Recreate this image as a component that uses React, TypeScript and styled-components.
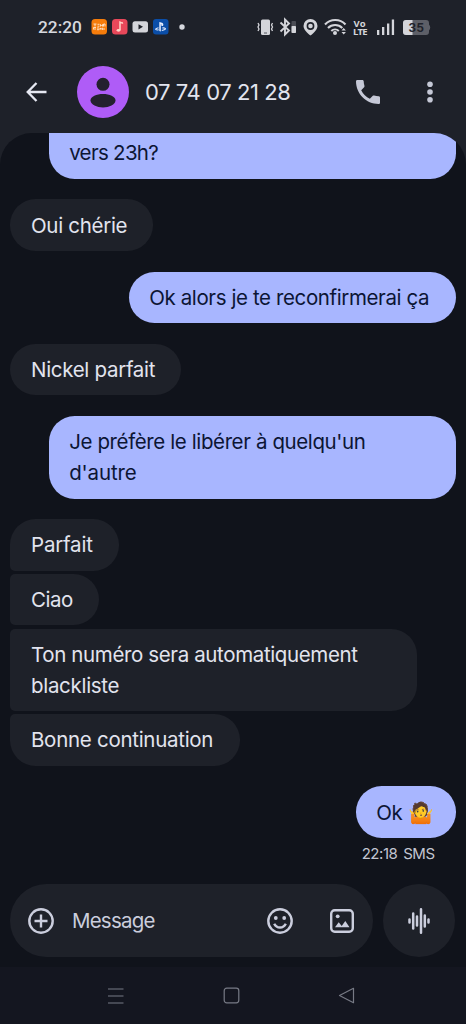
import React from 'react';
import styled, { createGlobalStyle } from 'styled-components';

const Global = createGlobalStyle`
  * { box-sizing: border-box; }
  body { margin: 0; background: #1e2129; }
`;

const Screen = styled.div`
  width: 466px;
  height: 1024px;
  display: flex;
  flex-direction: column;
  overflow: hidden;
  background: #1e2129;
  color: #e2e4ee;
  font-family: Inter, 'Liberation Sans', sans-serif;
  svg { display: block; flex: none; }
`;

const StatusBar = styled.div`
  height: 54px;
  flex: none;
  display: flex;
  align-items: center;
  justify-content: space-between;
  padding: 0 35px 0 38px;
`;

const StatusGroup = styled.div<{ $gap: number }>`
  display: flex;
  align-items: center;
  gap: ${(p) => p.$gap}px;
`;

const Clock = styled.span`
  width: 48px;
  font: 500 17.3px/20px Roboto, sans-serif;
  color: #d6d8de;
`;

const Header = styled.header`
  height: 79px;
  flex: none;
  display: flex;
  align-items: center;
  padding: 0 33px 3px 26px;
`;

const Avatar = styled.div`
  width: 52px;
  height: 52px;
  margin: 0 16px 0 30px;
  border-radius: 50%;
  background: #af5cf7;
  overflow: hidden;
`;

const Contact = styled.h1`
  flex: 1;
  margin: 0;
  font-size: 22px;
  font-weight: 400;
  line-height: 28px;
  letter-spacing: -0.42px;
  white-space: nowrap;
`;

const Actions = styled.div`
  display: flex;
  align-items: center;
  gap: 47px;
  color: #c5c8d6;
`;

const Conversation = styled.main`
  height: 834px;
  flex: none;
  display: flex;
  flex-direction: column;
  border-radius: 32px 32px 0 0;
  overflow: hidden;
  background: #10131b;
  padding: 0 10.4px;
`;

const Thread = styled.div`
  display: flex;
  flex-direction: column;
  gap: 20.6px;
  height: 751px;
  flex: none;
`;

const Group = styled.div<{ $sent?: boolean }>`
  display: flex;
  flex-direction: column;
  gap: 3.1px;
  align-items: ${(p) => (p.$sent ? 'flex-end' : 'flex-start')};
`;

const Bubble = styled.div<{ $sent?: boolean; $w: number; $radius?: string; $cut?: boolean }>`
  width: ${(p) => p.$w}px;
  padding: ${(p) => (p.$cut ? '4.2px 0 10.6px' : '10.3px 0')};
  padding-left: 20.6px;
  border-radius: ${(p) => p.$radius ?? '25.8px'};
  background: ${(p) => (p.$sent ? '#a8b6ff' : '#1e2129')};
  color: ${(p) => (p.$sent ? '#0c1534' : '#e2e4ee')};
`;

const Line = styled.div<{ $ls: number }>`
  font-size: 20.5px;
  line-height: 31px;
  letter-spacing: ${(p) => p.$ls}px;
  white-space: nowrap;
`;

const Stamp = styled.div`
  align-self: flex-end;
  margin: -14px 21px 0 0;
  font-size: 15px;
  line-height: 18px;
  letter-spacing: -0.45px;
  word-spacing: 2px;
  color: #c3c6d2;
`;

const Composer = styled.div`
  display: flex;
  gap: 10px;
`;

const Field = styled.div`
  width: 363px;
  height: 73px;
  border-radius: 37px;
  background: #1e2129;
  display: flex;
  align-items: center;
  padding: 0 18px;
  color: #cbcedd;
`;

const Placeholder = styled.span`
  flex: 1;
  margin-left: 17.5px;
  font-size: 20.5px;
  letter-spacing: -0.75px;
`;

const FieldIcons = styled.div`
  display: flex;
  gap: 36px;
`;

const Voice = styled.div`
  width: 72px;
  height: 73px;
  border-radius: 50%;
  background: #1e2129;
  display: grid;
  place-items: center;
`;

const NavBar = styled.nav`
  height: 57px;
  flex: none;
  background: #141620;
  display: flex;
  align-items: center;
  justify-content: space-between;
  padding: 0 111px 0 107px;
`;

type Msg = { lines: [string, number][]; w: number; radius?: string; cut?: boolean };
const thread: { sent?: boolean; items: Msg[] }[] = [
  { sent: true, items: [{ lines: [['vers 23h?', -0.7]], w: 407, radius: '0 0 25.8px 25.8px', cut: true }] },
  { items: [{ lines: [['Oui chérie', -0.3]], w: 142.5 }] },
  { sent: true, items: [{ lines: [['Ok alors je te reconfirmerai ça', -0.39]], w: 327 }] },
  { items: [{ lines: [['Nickel parfait', -0.3]], w: 171 }] },
  { sent: true, items: [{ lines: [["Je préfère le libérer à quelqu'un", -0.39], ["d'autre", -0.15]], w: 407 }] },
  {
    items: [
      { lines: [['Parfait', -0.2]], w: 109, radius: '25.8px 25.8px 25.8px 5px' },
      { lines: [['Ciao', -0.45]], w: 89, radius: '5px 25.8px 25.8px 5px' },
      { lines: [['Ton numéro sera automatiquement', -0.37], ['blackliste', -0.3]], w: 407, radius: '5px 25.8px 25.8px 5px' },
      { lines: [['Bonne continuation', -0.28]], w: 230, radius: '5px 25.8px 25.8px 25.8px' },
    ],
  },
  { sent: true, items: [{ lines: [['Ok 🤷', -0.3]], w: 100 }] },
];

const AppIcons = () => (
  <svg width="95" height="18" viewBox="0 0 95 18">
    <rect x="0.5" y="1" width="15.5" height="15.5" rx="3.5" fill="#f57c0b" />
    <g stroke="#ffe7cf" strokeWidth="0.9" fill="none">
      <path d="M2.5 6h3M4 6v2.5M6.5 6.3h2M6.5 8.2h2M9.5 8.5v-2l1 1 1-1v2M12.5 8.5V6H14v2.5M2.5 11.5v-2H5M4 12v-2M6 10h2M6 11.7h2M9 12v-2l1.200 1 1.200-1v2M13 10v2" />
    </g>
    <rect x="21" y="1" width="15.5" height="15.5" rx="3.5" fill="#e8485a" />
    <path d="M29 12V4.200c1 .6 2.300.8 3 .5" stroke="#ffd5c8" strokeWidth="1.500" fill="none" />
    <ellipse cx="27.500" cy="12.300" rx="1.900" ry="1.400" fill="#ffd5c8" />
    <rect x="41.500" y="3.300" width="15.500" height="11.200" rx="2.500" fill="#d4d5da" />
    <path d="M47.500 6.200v5.200l4.500-2.600z" fill="#1e2129" />
    <rect x="62" y="1" width="15.500" height="15.500" rx="3" fill="#0b4ea8" />
    <path d="M68.300 4l2.700.8c1.600.6 2 3.300.2 3.300l-.9-.3V6.200l-.5-.1v7.400l-1.500-.5z" fill="#e8efff" />
    <path d="M67.500 9.700c-3 .8-4 2-1 2.300l1.200-.2M71.300 10c2.500-.4 4.600.8 2 1.700l-2.500.9" fill="none" stroke="#e8efff" strokeWidth="1.100" />
    <circle cx="91" cy="9" r="2.700" fill="#d6d8de" />
  </svg>
);

const StatusIcons = () => (
  <svg width="176" height="20" viewBox="255 17 176 20" fill="#d4d5da">
    <rect x="261" y="19.500" width="9" height="15.500" rx="1.500" />
    <path d="M264 33h3" stroke="#555861" />
    <path d="M258 23l1 2-1 2 1 2-1 2M272.500 23l-1 2 1 2-1 2 1 2" fill="none" stroke="#d4d5da" strokeWidth="1.300" />
    <path d="M280.500 22.500l8.500 8-4 4V19.500l4 4-8.500 8" fill="none" stroke="#d4d5da" strokeWidth="1.900" />
    <rect x="291.500" y="21" width="4.500" height="12" rx=".8" fill="#4a4c54" />
    <rect x="291.500" y="26" width="4.500" height="7" rx=".8" />
    <path fillRule="evenodd" d="M310.500 19a7 7 0 0 0-7 7c0 4.500 7 9.500 7 9.500s7-5 7-9.500a7 7 0 0 0-7-7zm0 3.100a3.900 3.900 0 1 1 0 7.800a3.900 3.900 0 0 1 0-7.800z" />
    <circle cx="310.500" cy="26" r="2.300" />
    <g fill="none" stroke="#d4d5da" strokeWidth="2.100">
      <path d="M325 24.500a14 14 0 0 1 20.500 0M328 28a10 10 0 0 1 14.300 0M331.300 31a5.500 5.500 0 0 1 7.500 0" />
    </g>
    <circle cx="335" cy="33" r="2" />
    <path d="M341.500 30.500l2.200-2.500 2.200 2.500zM341.500 32l2.200 2.500 2.200-2.500z" />
    <text x="353.500" y="26.500" fontFamily="Open Sans" fontWeight="700" fontSize="9.500">Vo</text>
    <text x="353" y="35" fontFamily="Open Sans" fontWeight="700" fontSize="9.500" textLength="14.500">LTE</text>
    <path d="M377 30h2.300v5H377zM382 27h2.300v8H382zM387 23.500h2.300V35H387zM391.800 19.500h2.300V35h-2.300z" />
    <path d="M406 20h20a3 3 0 0 1 3 3v1.500q2.500 3 0 6V32a3 3 0 0 1-3 3h-20a3 3 0 0 1-3-3v-9a3 3 0 0 1 3-3z" fill="#5d5f67" />
    <path d="M406 20h6.500v15H406a3 3 0 0 1-3-3v-9a3 3 0 0 1 3-3z" />
    <text x="408.500" y="32.300" fontFamily="Roboto" fontWeight="600" fontSize="13.500" fill="#20222a">35</text>
  </svg>
);

export default function App() {
  return (
    <Screen>
      <Global />
      <StatusBar>
        <StatusGroup $gap={5}>
          <Clock>22:20</Clock>
          <AppIcons />
        </StatusGroup>
        <StatusIcons />
      </StatusBar>
      <Header>
        <svg width="21" height="20" viewBox="0 0 21 20" fill="none" stroke="#e6e8f2" strokeWidth="2.300">
          <path d="M20.500 10H2M10.500 1L1.700 10l8.800 9" />
        </svg>
        <Avatar>
          <svg width="52" height="52" viewBox="0 0 52 52" fill="#24202f">
            <circle cx="26" cy="18.300" r="6.500" />
            <path d="M13.500 34.500c0-4 6-6.500 12.500-6.500s12.500 2.500 12.500 6.500-6.500 7-12.500 7-12.500-3-12.500-7z" />
          </svg>
        </Avatar>
        <Contact>07 74 07 21 28</Contact>
        <Actions>
          <svg width="24" height="24" viewBox="3 3 18 18" fill="currentColor">
            <path d="M6.900 10.600c1.440 2.830 3.660 5.040 6.490 6.490l2.200-2.200c.27-.27.67-.36 1.020-.24 1.120.370 2.230.570 3.390.570.550 0 1 .45 1 1V20c0 .55-.45 1-1 1C10.610 21 3 13.390 3 4c0-.55.45-1 1-1h3.780c.55 0 1 .45 1 1 0 1.150.2 2.250.57 3.370.11.350.03.740-.25 1.020z" />
          </svg>
          <svg width="6" height="22" viewBox="0 0 6 22" fill="currentColor">
            <circle cx="3" cy="3.200" r="2.800" />
            <circle cx="3" cy="11" r="2.800" />
            <circle cx="3" cy="18.800" r="2.800" />
          </svg>
        </Actions>
      </Header>
      <Conversation>
        <Thread>
          {thread.map((g, i) => (
            <Group key={i} $sent={g.sent}>
              {g.items.map((m, j) => (
                <Bubble key={j} $sent={g.sent} $w={m.w} $radius={m.radius} $cut={m.cut}>
                  {m.lines.map(([t, ls]) => (
                    <Line key={t} $ls={ls}>{t}</Line>
                  ))}
                </Bubble>
              ))}
            </Group>
          ))}
          <Stamp>22:18 SMS</Stamp>
        </Thread>
        <Composer>
          <Field>
            <svg width="26" height="26" viewBox="0 0 26 26" fill="none" stroke="currentColor" strokeWidth="2.400">
              <circle cx="13" cy="13" r="11.700" />
              <path d="M13 6.500v13M6.500 13h13" />
            </svg>
            <Placeholder>Message</Placeholder>
            <FieldIcons>
              <svg width="26" height="26" viewBox="0 0 26 26" fill="none" stroke="currentColor" strokeWidth="2.400">
                <circle cx="13" cy="13" r="11.700" />
                <path d="M7.200 15.800c2.500 5 9.100 5 11.600 0" />
                <g fill="currentColor" stroke="none">
                  <circle cx="8.800" cy="10" r="1.900" />
                  <circle cx="17.200" cy="10" r="1.900" />
                </g>
              </svg>
              <svg width="26" height="26" viewBox="0 0 26 26" fill="none" stroke="currentColor" strokeWidth="2.400">
                <rect x="2.200" y="2.200" width="21.600" height="21.600" rx="3.500" />
                <circle cx="8.700" cy="8.300" r="1.900" fill="currentColor" stroke="none" />
                <path d="M6 19.300l3.700-5 3 3.600 3.600-4.800 4.200 6.200z" fill="currentColor" stroke="none" />
              </svg>
            </FieldIcons>
          </Field>
          <Voice>
            <svg width="24" height="28" viewBox="0 0 24 28" stroke="#cbcedd" strokeWidth="2.500" strokeLinecap="round">
              <path d="M2.500 12.500v3M6.200 6.500v15M10 9.500v9M14 2.200v23.600M17.800 8.500v11M21.500 12.500v3" />
            </svg>
          </Voice>
        </Composer>
      </Conversation>
      <NavBar>
        <svg width="17" height="18" viewBox="0 0 17 18" stroke="#777a85" strokeWidth="1.200">
          <path d="M1 2h15.500M1 9h15.500M1 16h15.500" />
        </svg>
        <svg width="17" height="17" viewBox="0 0 17 17" fill="none" stroke="#777a85" strokeWidth="1.200">
          <rect x="1.200" y="1.200" width="14.600" height="14.600" rx="2.500" />
        </svg>
        <svg width="17" height="17" viewBox="0 0 17 17" fill="none" stroke="#777a85" strokeWidth="1.200" strokeLinejoin="round">
          <path d="M1.500 8.500L15.500 1.300v14.400z" />
        </svg>
      </NavBar>
    </Screen>
  );
}
